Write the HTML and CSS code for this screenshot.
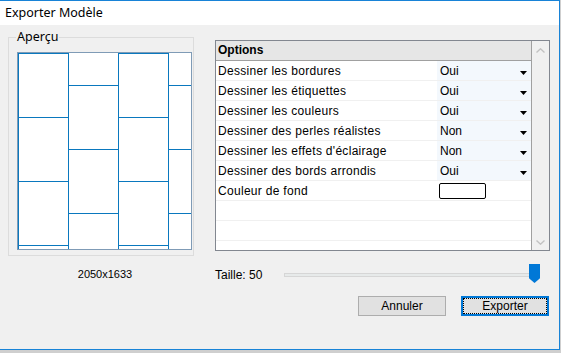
FILE: index.html
```html
<!DOCTYPE html>
<html lang="fr">
<head>
    <meta charset="UTF-8">
    <title>Exporter Modèle</title>
    <link rel="stylesheet" href="styles.css">
</head>
<body>
    <div class="window">
        <div class="titlebar">Exporter Modèle</div>
        <div class="content">
            <div class="left">
                <fieldset class="group">
                    <legend>Aperçu</legend>
                    <div class="preview">
                        <svg width="173" height="196" viewBox="0 0 173 196">
                            <g stroke="#0a78be" stroke-width="1" fill="none">
                                <!-- columns -->
                                <line x1="0.5" y1="0" x2="0.5" y2="196"/>
                                <line x1="50.5" y1="0" x2="50.5" y2="196"/>
                                <line x1="100.5" y1="0" x2="100.5" y2="196"/>
                                <line x1="150.5" y1="0" x2="150.5" y2="196"/>
                                <!-- bricks, columns 1 and 3 -->
                                <line x1="0" y1="0.5" x2="51" y2="0.5"/>
                                <line x1="0" y1="64.5" x2="51" y2="64.5"/>
                                <line x1="0" y1="128.5" x2="51" y2="128.5"/>
                                <line x1="0" y1="192.5" x2="51" y2="192.5"/>
                                <line x1="100" y1="0.5" x2="151" y2="0.5"/>
                                <line x1="100" y1="64.5" x2="151" y2="64.5"/>
                                <line x1="100" y1="128.5" x2="151" y2="128.5"/>
                                <line x1="100" y1="192.5" x2="151" y2="192.5"/>
                                <!-- bricks, columns 2 and 4 -->
                                <line x1="50" y1="32.5" x2="101" y2="32.5"/>
                                <line x1="50" y1="96.5" x2="101" y2="96.5"/>
                                <line x1="50" y1="160.5" x2="101" y2="160.5"/>
                                <line x1="150" y1="32.5" x2="173" y2="32.5"/>
                                <line x1="150" y1="96.5" x2="173" y2="96.5"/>
                                <line x1="150" y1="160.5" x2="173" y2="160.5"/>
                            </g>
                        </svg>
                    </div>
                </fieldset>
                <div class="size">2050x1633</div>
            </div>

            <div class="right">
                <div class="props">
                    <div class="list">
                        <div class="head">Options</div>
                        <div class="row"><span class="name">Dessiner les bordures</span><span class="value">Oui<svg class="arrow" width="7" height="4" viewBox="0 0 7 4"><path d="M0 0h7L3.5 4z"/></svg></span></div>
                        <div class="row"><span class="name">Dessiner les étiquettes</span><span class="value">Oui<svg class="arrow" width="7" height="4" viewBox="0 0 7 4"><path d="M0 0h7L3.5 4z"/></svg></span></div>
                        <div class="row"><span class="name">Dessiner les couleurs</span><span class="value">Oui<svg class="arrow" width="7" height="4" viewBox="0 0 7 4"><path d="M0 0h7L3.5 4z"/></svg></span></div>
                        <div class="row"><span class="name">Dessiner des perles réalistes</span><span class="value">Non<svg class="arrow" width="7" height="4" viewBox="0 0 7 4"><path d="M0 0h7L3.5 4z"/></svg></span></div>
                        <div class="row"><span class="name">Dessiner les effets d'éclairage</span><span class="value">Non<svg class="arrow" width="7" height="4" viewBox="0 0 7 4"><path d="M0 0h7L3.5 4z"/></svg></span></div>
                        <div class="row"><span class="name">Dessiner des bords arrondis</span><span class="value">Oui<svg class="arrow" width="7" height="4" viewBox="0 0 7 4"><path d="M0 0h7L3.5 4z"/></svg></span></div>
                        <div class="row"><span class="name">Couleur de fond</span><span class="value plain"><span class="swatch"></span></span></div>
                        <div class="row"><span class="name"></span><span class="value plain"></span></div>
                        <div class="row"><span class="name"></span><span class="value plain"></span></div>
                    </div>
                    <div class="scroll">
                        <svg width="9" height="5" viewBox="0 0 9 5"><path d="M0.5 4.5L4.5 0.8L8.5 4.5" stroke="#c2c2c2" stroke-width="1.4" fill="none"/></svg>
                        <svg width="9" height="5" viewBox="0 0 9 5"><path d="M0.5 0.5L4.5 4.2L8.5 0.5" stroke="#c2c2c2" stroke-width="1.4" fill="none"/></svg>
                    </div>
                </div>

                <div class="slider-row">
                    <span class="slider-label">Taille: 50</span>
                    <div class="track"><span class="thumb"></span></div>
                </div>

                <div class="buttons">
                    <button type="button" class="btn">Annuler</button>
                    <button type="button" class="btn default">Exporter</button>
                </div>
            </div>
        </div>
    </div>
</body>
</html>
```

FILE: styles.css
```css
html {
    background-color: #cfcfcf;
}
body {
    margin: 0;
    font-family: "Liberation Sans", Arial, sans-serif;
    font-size: 12px;
    color: #000;
}
.window {
    width: 559px;
    border-top: 1px solid #1883d7;
    border-right: 1px solid #1883d7;
    border-bottom: 1px solid #1883d7;
    background-color: #f0f0f0;
}
.titlebar {
    height: 24px;
    line-height: 24px;
    padding-left: 5px;
    background-color: #fff;
    font-family: "Noto Sans", sans-serif;
    font-size: 12.5px;
}
.content {
    height: 324px;
    box-sizing: border-box;
    padding: 4px 0 0 8px;
    display: grid;
    grid-template-columns: 194px 335px;
    column-gap: 13px;
}

/* preview group */
.group {
    margin: 0;
    padding: 0 0 5px 8px;
    border: 1px solid #dcdcdc;
    width: 176px;
}
.group legend {
    margin-left: -1px;
    padding: 0 1px;
    line-height: 16px;
    font-family: "Noto Sans", sans-serif;
    font-size: 12.5px;
}
.preview {
    margin-top: 7px;
    width: 173px;
    height: 196px;
    border: 1px solid #7f9bb6;
    background-color: #fff;
}
.preview svg {
    display: block;
}
.size {
    margin-top: 12px;
    text-align: center;
    font-size: 11px;
}

/* property grid */
.right {
    padding-top: 11px;
}
.props {
    display: flex;
    height: 209px;
    border: 1px solid #828790;
    background-color: #fff;
}
.list {
    width: 315px;
}
.head {
    height: 19px;
    line-height: 19px;
    padding-left: 2px;
    background-color: #e6e6e6;
    border-bottom: 1px solid #a0a0a0;
    font-weight: bold;
}
.row {
    display: flex;
    height: 19px;
    border-bottom: 1px solid #f0f0f0;
}
.name {
    width: 219px;
    padding-left: 2px;
    line-height: 20px;
    letter-spacing: 0.3px;
}
.value {
    flex: 1;
    display: flex;
    align-items: center;
    padding: 0 4px 0 3px;
    background-color: #f3f8fd;
    line-height: 20px;
}
.value.plain {
    background-color: #fff;
    padding-left: 2px;
}
.arrow {
    margin-left: auto;
    margin-top: 5px;
}
.swatch {
    width: 45px;
    height: 14px;
    border: 1px solid #000;
    border-radius: 2px;
}
.scroll {
    flex: 1;
    border-left: 1px solid #a0a0a0;
    background-color: #f0f0f0;
    display: flex;
    flex-direction: column;
    align-items: center;
    justify-content: space-between;
    padding: 7px 0 5px;
}
.scroll svg {
    display: block;
}

/* slider */
.slider-row {
    display: flex;
    align-items: center;
    height: 20px;
    margin-top: 14px;
}
.slider-label {
    width: 69px;
}
.track {
    position: relative;
    width: 254px;
    height: 2px;
    background-color: #e7eaea;
    border: 1px solid #d6d6d6;
}
.thumb {
    position: absolute;
    right: -1px;
    top: -10px;
    width: 11px;
    height: 19px;
    background-color: #0078d7;
    clip-path: polygon(0 0, 100% 0, 100% 75%, 50% 100%, 0 75%);
}

/* buttons */
.buttons {
    display: flex;
    justify-content: flex-end;
    gap: 15px;
    margin-top: 11px;
    padding-right: 1px;
}
.btn {
    width: 88px;
    height: 20px;
    padding: 0;
    background-color: #e1e1e1;
    border: 1px solid #adadad;
    font-family: "Liberation Sans", Arial, sans-serif;
    font-size: 12px;
    color: #000;
}
.btn.default {
    border: 2px solid #0078d7;
    outline: 1px dotted #000;
    outline-offset: -3px;
}
```
